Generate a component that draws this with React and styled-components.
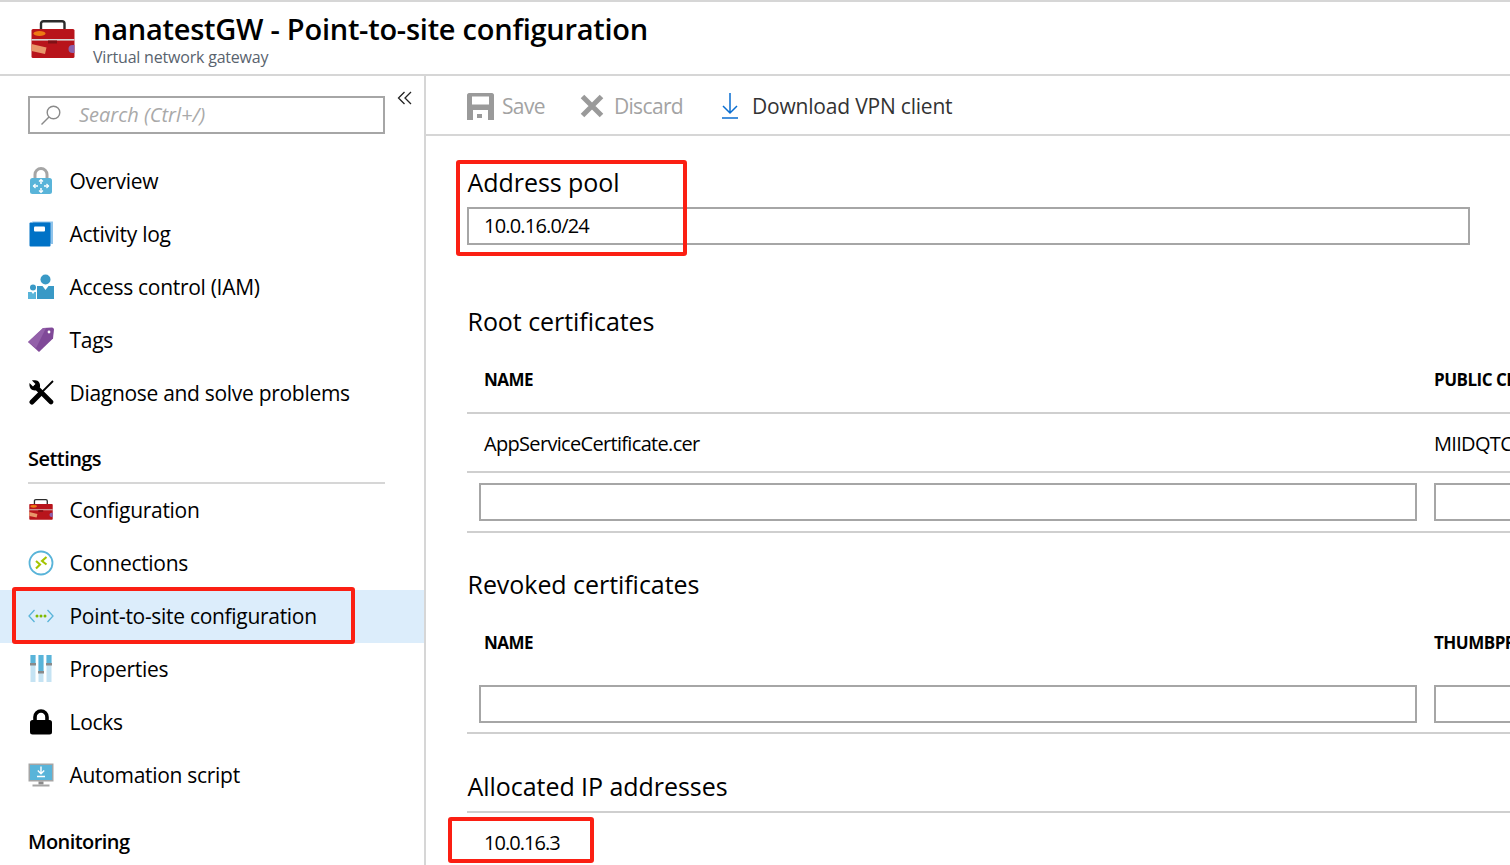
import React from "react";
import styled, { createGlobalStyle } from "styled-components";

const Global = createGlobalStyle`
  html, body { margin: 0; padding: 0; background: #fff; }
  body { font-family: "Open Sans", "Noto Sans", "Liberation Sans", sans-serif; color: #000; }
  * { box-sizing: border-box; }
`;

const Page = styled.div`
  width: 1510px; height: 865px; overflow: hidden;
  border-top: 2px solid #d6d6d6;
  display: flex; flex-direction: column;
`;
const Header = styled.header`
  height: 74px; flex: none;
  border-bottom: 2px solid #d6d6d6;
  display: flex; align-items: flex-start;
  padding: 13px 0 0 31px; gap: 18px;
`;
const Logo = styled.span`display: flex; margin-top: 5px;`;
const TitleBlock = styled.div`display: flex; flex-direction: column;`;
const Title = styled.h1`
  margin: 0; font-size: 29px; line-height: 28px; font-weight: 600; letter-spacing: -0.25px; white-space: pre; color: #000;
`;
const Subtitle = styled.div`
  font-size: 16px; line-height: 20px; margin-top: 4px; color: #59636e; letter-spacing: -0.2px;
`;
const Body = styled.div`flex: 1; display: flex; min-height: 0;`;
const Sidebar = styled.aside`
  width: 426px; flex: none; border-right: 2px solid #d6d6d6;
  display: flex; flex-direction: column; padding-top: 20px;
`;
const SearchRow = styled.div`
  display: flex; align-items: flex-start; padding: 0 0 0 28px; height: 38px; margin-bottom: 21px; flex: none;
`;
const SearchBox = styled.div`
  width: 357px; height: 38px; border: 2px solid #a6a6a6;
  display: flex; align-items: center; padding: 0 0 1px 10px; gap: 17px;
`;
const SearchText = styled.span`
  font-size: 20px; font-style: italic; color: #a9a9a9; letter-spacing: 0;
`;
const Collapse = styled.button`
  border: 0; background: none; padding: 0; margin: -6px 0 0 12px; width: 16px; height: 16px; display: flex;
`;
const NavItem = styled.div`
  height: 53px; flex: none; display: flex; align-items: center; padding: 0 0 2px 28px; gap: 15.5px; position: relative;
  background: ${p => (p.$active ? "#dcedfb" : "transparent")};
  font-size: 21px; letter-spacing: -0.3px; color: #000;
`;
const IconSlot = styled.span`
  width: 26px; height: 26px; flex: none; display: flex; align-items: center; justify-content: center;
`;
const SectionHead = styled.div`
  flex: none; font-size: 20px; font-weight: 600; letter-spacing: -0.55px; line-height: 28px; margin-left: 28px; width: 357px;
  margin-top: ${p => p.$top}px;
  padding-bottom: ${p => (p.$line ? "9px" : "0")};
  border-bottom: ${p => (p.$line ? "2px solid #d6d6d6" : "none")};
`;
const Main = styled.main`flex: 1; min-width: 0; display: flex; flex-direction: column; overflow: hidden;`;
const Toolbar = styled.div`
  height: 60px; flex: none; border-bottom: 2px solid #d6d6d6;
  display: flex; align-items: center; padding: 2px 0 0 41px;
`;
const Tool = styled.div`
  display: flex; align-items: center; gap: ${p => p.$gap}px; margin-right: ${p => p.$mr}px;
  font-size: 21px; letter-spacing: ${p => (p.$off ? "-0.65px" : "-0.2px")}; color: ${p => (p.$off ? "#a3a3a3" : "#333")};
`;
const Content = styled.div`padding: 0 0 0 41px; position: relative; display: flex; flex-direction: column; flex: none;`;
const Heading = styled.h2`
  margin: ${p => p.$top}px 0 0 0.5px; font-size: 25px; font-weight: 400; line-height: 34px; letter-spacing: -0.05px; color: #000;
`;
const Field = styled.div`
  height: 38px; border: 2px solid #a6a6a6; width: ${p => p.$w}px; flex: none;
  display: flex; align-items: center; padding: 0 0 1px 15px; font-size: 20px; letter-spacing: -0.8px;
`;
const HeadRow = styled.div`
  display: grid; grid-template-columns: 950px 200px; height: ${p => p.$h}px; align-items: center;
  padding: ${p => p.$pt}px 0 0 17px; font-size: 17px; font-weight: 700; letter-spacing: -0.5px; white-space: nowrap; overflow: hidden;
  border-bottom: ${p => (p.$line ? "2px solid #cfcfcf" : "none")};
  margin-top: 7px;
`;
const DataRow = styled.div`
  display: grid; grid-template-columns: 950px 200px; height: 59px; align-items: center;
  padding: 2px 0 0 17px; font-size: 20px; letter-spacing: -0.68px; white-space: nowrap; overflow: hidden;
  border-bottom: 2px solid #cfcfcf;
`;
const InputRow = styled.div`
  display: flex; gap: 17px; padding: ${p => p.$pt}px 0 ${p => p.$pb}px 12px; border-bottom: 2px solid #cfcfcf;
`;
const Allocated = styled.div`
  border-top: 2px solid #cfcfcf; padding: 16px 0 0 17px; font-size: 20px; letter-spacing: -0.95px; line-height: 28px; margin-top: 8px;
`;
const Mark = styled.div`
  position: absolute; border: 4px solid #fb1f13; border-radius: 3px; pointer-events: none;
  left: ${p => p.$l}px; top: ${p => p.$t}px; width: ${p => p.$w}px; height: ${p => p.$h}px;
`;

const Toolbox = ({ s = 44 }) => (
  <svg width={s} height={s * 0.875} viewBox="0 0 44 38.500">
    <path d="M10 10V3.500C10 2 11 1.200 12.500 1.200h18.500c1.500 0 2.500.8 2.500 2.300V10" fill="none" stroke="#2b2b2b" strokeWidth="2.400" />
    <rect x="0.500" y="9" width="43" height="29" rx="1.500" fill="#b8141b" />
    <rect x="0.500" y="19" width="43" height="1.600" fill="#d8d8d8" />
    <rect x="17" y="20.500" width="9" height="3" fill="#7f1015" />
    <ellipse cx="8.500" cy="13.500" rx="6" ry="2.400" fill="#ee7a14" />
    <path d="M0.500 24l15 3.500-1.500 6.500-13.500-3z" fill="#e8966a" />
    <path d="M43.500 25v8h-2a4 4 0 0 1 0-8z" fill="#8c62ad" />
  </svg>
);
const Search = () => (
  <svg width="22" height="22" viewBox="0 0 22 22" fill="none" stroke="#8a8a8a" strokeWidth="1.400">
    <circle cx="13.500" cy="8.500" r="6.300" />
    <path d="M9 13L1.500 20.500" />
  </svg>
);
const Overview = () => (
  <svg width="24" height="28" viewBox="0 0 24 28">
    <path d="M6 12V7.500a6 6 0 0 1 12 0V12" fill="none" stroke="#a5a5a5" strokeWidth="3" />
    <rect x="1" y="11" width="22" height="16" rx="2.500" fill="#59b4d9" />
    <path d="M12 13v4M12 21v4M4.500 19h4.500M15 19h4.500" stroke="#fff" strokeWidth="1.500" />
    <path d="M10 14.500l2-2 2 2M10 23.500l2 2 2-2M6.500 17l-2 2 2 2M17.500 17l2 2-2 2" fill="none" stroke="#fff" strokeWidth="1.200" />
  </svg>
);
const Book = () => (
  <svg width="24" height="26" viewBox="0 0 24 26">
    <path d="M3 0.500h21V23h-2z" fill="#8fc3ea" />
    <rect x="0.500" y="1.500" width="21" height="24" rx="1" fill="#0072c6" />
    <rect x="5" y="5.500" width="11" height="5" rx="1" fill="#fff" />
  </svg>
);
const Access = () => (
  <svg width="26" height="25" viewBox="0 0 26 25">
    <circle cx="17.500" cy="5.500" r="5" fill="#3999c6" />
    <path d="M9 12h5.500l3 4 3-4H26v13H9z" fill="#3999c6" />
    <circle cx="5" cy="13.500" r="3" fill="#3999c6" />
    <path d="M0 18h3.500l1.500 2 1.500-2H8v7H0z" fill="#59b4d9" />
  </svg>
);
const Tag = () => (
  <svg width="26" height="26" viewBox="0 0 26 26">
    <path d="M0 15L15 1l9-.5c1 0 2 1 2 2l-1 9L11 25z" fill="#804998" />
    <path d="M0 15L15 1l3 0L8 21z" fill="#9b6bb0" opacity=".7" />
    <circle cx="21" cy="5" r="1.400" fill="#fff" />
  </svg>
);
const Wrench = () => (
  <svg width="25" height="25" viewBox="0 0 25 25">
    <path d="M24 1L11 14" stroke="#000" strokeWidth="1.800" />
    <path d="M11 14L3 22" stroke="#000" strokeWidth="5" strokeLinecap="round" />
    <path d="M7 7L22 22" stroke="#000" strokeWidth="4.600" strokeLinecap="round" />
    <path d="M7.500 0.500C4.500 0 3 .5 3 .5l3.500 3.500-2.500 2.500L.5 3C0 6 1 9 3.500 10c1.500.6 3.500.5 5 0L11 7c.5-3-1-6-3.500-6.500z" fill="#000" />
  </svg>
);
const Connections = () => (
  <svg width="26" height="26" viewBox="0 0 26 26" fill="none">
    <circle cx="13" cy="13" r="11.500" stroke="#59b4d9" strokeWidth="1.800" />
    <path d="M8 11l4 3.500-4 4M18.500 7l-4.500 4 4.500 3.500" stroke="#a4c400" strokeWidth="2.100" />
  </svg>
);
const P2S = () => (
  <svg width="26" height="14" viewBox="0 0 26 14" fill="none">
    <path d="M6.500 1L1 7l5.500 6M19.500 1L25 7l-5.500 6" stroke="#59b4d9" strokeWidth="1.300" />
    <circle cx="9" cy="7" r="1.500" fill="#7fba00" /><circle cx="13" cy="7" r="1.500" fill="#7fba00" /><circle cx="17" cy="7" r="1.500" fill="#7fba00" />
  </svg>
);
const Props = () => (
  <svg width="22" height="27" viewBox="0 0 22 27">
    <rect x="0.500" y="0" width="5" height="27" fill="#c5e3f3" /><rect x="8.500" y="0" width="5" height="27" fill="#c5e3f3" /><rect x="16.500" y="0" width="5" height="27" fill="#c5e3f3" />
    <rect x="0.500" y="0" width="5" height="8" fill="#59b4d9" /><rect x="8.500" y="0" width="5" height="16" fill="#59b4d9" /><rect x="16.500" y="0" width="5" height="8" fill="#59b4d9" />
    <rect x="0" y="8" width="6" height="2.500" fill="#8a8a8a" /><rect x="8" y="16" width="6" height="2.500" fill="#8a8a8a" /><rect x="16" y="8" width="6" height="2.500" fill="#8a8a8a" />
  </svg>
);
const Lock = () => (
  <svg width="24" height="26" viewBox="0 0 24 26">
    <path d="M6 12V8a6 6 0 0 1 12 0v4" fill="none" stroke="#000" strokeWidth="3.600" />
    <rect x="1" y="11" width="22" height="14.500" rx="2.500" fill="#000" />
  </svg>
);
const Monitor = () => (
  <svg width="26" height="24" viewBox="0 0 26 24">
    <rect x="0.500" y="0.500" width="25" height="18" fill="#a5a5a5" />
    <rect x="2" y="2" width="22" height="15" fill="#59b4d9" />
    <path d="M13 3.500v7M9.800 7.500l3.200 3.200 3.200-3.200M9 13.500h8" fill="none" stroke="#fff" strokeWidth="1.400" />
    <rect x="10.500" y="18.500" width="5" height="3" fill="#8a8a8a" />
    <rect x="4.500" y="21.500" width="17" height="2" fill="#a5a5a5" />
  </svg>
);
const Disk = () => (
  <svg width="27" height="27" viewBox="0 0 27 27">
    <path d="M2 0h23c1 0 2 1 2 2V27H0V2C0 1 1 0 2 0z" fill="#9a9a9a" />
    <rect x="5" y="3.500" width="17" height="8" fill="#fff" />
    <rect x="6" y="17" width="15" height="10" fill="#fff" />
    <rect x="10" y="21" width="5" height="4" fill="#9a9a9a" />
  </svg>
);
const Cross = () => (
  <svg width="24" height="24" viewBox="0 0 24 24"><path d="M2.500 2.500l19 19M21.500 2.500l-19 19" stroke="#9a9a9a" strokeWidth="5" /></svg>
);
const Download = () => (
  <svg width="18" height="26" viewBox="0 0 18 26" fill="none" stroke="#0a6ed1" strokeWidth="1.500">
    <path d="M9 0v20M2 13l7 7 7-7M1 25h16" />
  </svg>
);

const first = [[<Overview />, "Overview"], [<Book />, "Activity log"], [<Access />, "Access control (IAM)"], [<Tag />, "Tags"], [<Wrench />, "Diagnose and solve problems"]];
const settings = [[<Toolbox s={24} />, "Configuration"], [<Connections />, "Connections"], [<P2S />, "Point-to-site configuration", true], [<Props />, "Properties"], [<Lock />, "Locks"], [<Monitor />, "Automation script"]];

const Item = ({ icon, label, active }) => (
  <NavItem $active={active}>
    <IconSlot>{icon}</IconSlot>
    {label}
    {active && <Mark $l={12} $t={-3} $w={343} $h={57} />}
  </NavItem>
);

export default function App() {
  return (
    <Page>
      <Global />
      <Header>
        <Logo><Toolbox /></Logo>
        <TitleBlock>
          <Title>nanatestGW - Point-to-site configuration</Title>
          <Subtitle>Virtual network gateway</Subtitle>
        </TitleBlock>
      </Header>
      <Body>
        <Sidebar>
          <SearchRow>
            <SearchBox><Search /><SearchText>Search (Ctrl+/)</SearchText></SearchBox>
            <Collapse aria-label="Collapse">
              <svg width="16" height="16" viewBox="0 0 16 16" fill="none" stroke="#222" strokeWidth="1.300"><path d="M7.500 2L1.500 8l6 6M14 2L8 8l6 6" /></svg>
            </Collapse>
          </SearchRow>
          {first.map(([i, l]) => <Item key={l} icon={i} label={l} />)}
          <SectionHead $top={25} $line>Settings</SectionHead>
          {settings.map(([i, l, a]) => <Item key={l} icon={i} label={l} active={a} />)}
          <SectionHead $top={26}>Monitoring</SectionHead>
        </Sidebar>
        <Main>
          <Toolbar>
            <Tool $off $gap={8} $mr={35}><Disk />Save</Tool>
            <Tool $off $gap={10} $mr={38}><Cross />Discard</Tool>
            <Tool $gap={13}><Download />Download VPN client</Tool>
          </Toolbar>
          <Content>
            <Heading $top={29}>Address pool</Heading>
            <Field $w={1003} style={{ marginTop: 8 }}>10.0.16.0/24</Field>
            <Mark $l={30} $t={24} $w={231} $h={96} />
            <Heading $top={59}>Root certificates</Heading>
            <HeadRow $h={69} $pt={1} $line><span>NAME</span><span>PUBLIC CERTIFICATE DATA</span></HeadRow>
            <DataRow><span>AppServiceCertificate.cer</span><span>MIIDQTCCAimgAwIBAgIQ</span></DataRow>
            <InputRow $pt={10} $pb={10}><Field $w={938} /><Field $w={200} /></InputRow>
            <Heading $top={34}>Revoked certificates</Heading>
            <HeadRow $h={65} $pt={3}><span>NAME</span><span>THUMBPRINT</span></HeadRow>
            <InputRow $pt={12} $pb={9}><Field $w={938} /><Field $w={200} /></InputRow>
            <Heading $top={35}>Allocated IP addresses</Heading>
            <Allocated>10.0.16.3</Allocated>
            <Mark $l={22} $t={681} $w={146} $h={46} />
          </Content>
        </Main>
      </Body>
    </Page>
  );
}
